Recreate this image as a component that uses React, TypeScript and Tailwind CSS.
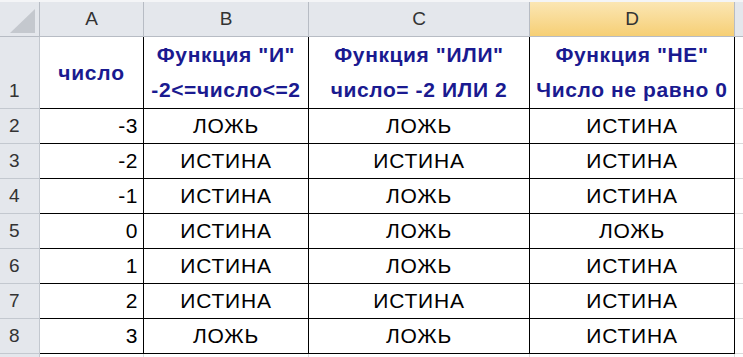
const cols = ["A", "B", "C", "D"];

const rows: [string, string, string, string][] = [
  ["-3", "ЛОЖЬ", "ЛОЖЬ", "ИСТИНА"],
  ["-2", "ИСТИНА", "ИСТИНА", "ИСТИНА"],
  ["-1", "ИСТИНА", "ЛОЖЬ", "ИСТИНА"],
  ["0", "ИСТИНА", "ЛОЖЬ", "ЛОЖЬ"],
  ["1", "ИСТИНА", "ЛОЖЬ", "ИСТИНА"],
  ["2", "ИСТИНА", "ИСТИНА", "ИСТИНА"],
  ["3", "ЛОЖЬ", "ЛОЖЬ", "ИСТИНА"],
];

const font = { fontFamily: '"Liberation Sans", Arial, sans-serif' };

function RowHead({ n, tall }: { n: string; tall?: boolean }) {
  return (
    <div
      className={`flex ${tall ? "items-end pb-[3px]" : "items-center"} border-r border-b border-[#c3c8cf] bg-[#e4e7ec] pl-[9px] text-[19px] text-[#333]`}
    >
      {n}
    </div>
  );
}

export default function App() {
  return (
    <div className="h-[357px] w-[743px] overflow-hidden bg-white" style={font}>
      <div className="grid grid-cols-[40px_104px_165px_221px_205px_1fr] grid-rows-[35px_72px_repeat(7,35px)_1fr] h-[357px] border-t-2 border-t-[#f4f5f7]">
        {/* header row */}
        <div className="relative border-r border-b border-[#b7bcc4] bg-[#e4e7ec]">
          <svg className="absolute left-[10px] top-[7px]" width="25" height="24" viewBox="0 0 25 24">
            <polygon points="25,0 25,24 0,24" fill="#c4c8ce" />
          </svg>
        </div>
        {cols.map((c) => (
          <div
            key={c}
            className={`flex items-center justify-center border-r border-b border-[#b7bcc4] text-[19px] text-[#333] ${
              c === "D" ? "bg-gradient-to-b from-[#fbe6b3] to-[#f6cf74]" : "bg-[#e4e7ec]"
            }`}
          >
            {c}
          </div>
        ))}
        <div className="border-b border-[#b7bcc4] bg-[#e4e7ec]" />

        {/* row 1 */}
        <RowHead n="1" tall />
        <div className="flex items-center justify-center border-r border-b border-black text-[21px] font-bold tracking-[0.8px] text-[#1a1a90]">
          число
        </div>
        {[
          ['Функция "И"', "-2<=число<=2"],
          ['Функция "ИЛИ"', "число= -2 ИЛИ 2"],
          ['Функция "НЕ"', "Число не равно 0"],
        ].map(([a, b]) => (
          <div
            key={a}
            className="flex flex-col items-center justify-center gap-[11px] border-r border-b border-black text-[21px] leading-[24px] font-bold tracking-[0.6px] text-[#1a1a90] whitespace-nowrap"
          >
            <span>{a}</span>
            <span>{b}</span>
          </div>
        ))}
        <div className="border-b border-[#d9d9d9]" />

        {rows.map((r, i) => (
          <div key={i} className="contents">
            <RowHead n={String(i + 2)} />
            <div className="flex items-center justify-end border-r border-b border-black pr-[5px] text-[21px] tracking-[0.5px] text-black">
              {r[0]}
            </div>
            {r.slice(1).map((v, j) => (
              <div
                key={j}
                className="flex items-center justify-center border-r border-b border-black text-[21px] tracking-[0.8px] text-black"
              >
                {v}
              </div>
            ))}
            <div className="border-b border-[#d9d9d9]" />
          </div>
        ))}

        {/* partial row 9 */}
        <div className="border-r border-[#c3c8cf] bg-[#e4e7ec]" />
        <div className="border-r border-[#d9d9d9]" />
        <div className="border-r border-[#d9d9d9]" />
        <div className="border-r border-[#d9d9d9]" />
        <div className="border-r border-[#d9d9d9]" />
        <div />
      </div>
    </div>
  );
}
